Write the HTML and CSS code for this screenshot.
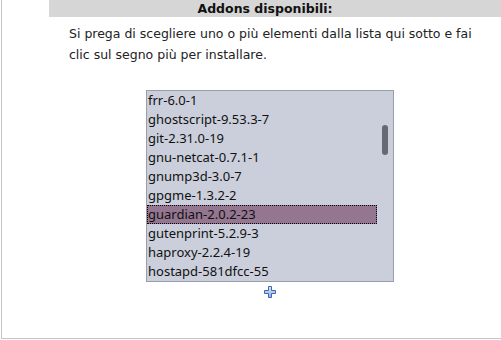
FILE: index.html
```html
<!DOCTYPE html>
<html lang="it">
<head>
    <meta charset="UTF-8">
    <title>Addons disponibili</title>
    <link rel="stylesheet" href="styles.css">
</head>
<body>
    <div class="panel">
        <div class="panel-title">Addons disponibili:</div>
        <p class="intro">Si prega di scegliere uno o più elementi dalla lista qui sotto e fai clic sul segno più per installare.</p>

        <div class="addon-list">
            <ul class="items">
                <li>frr-6.0-1</li>
                <li>ghostscript-9.53.3-7</li>
                <li>git-2.31.0-19</li>
                <li>gnu-netcat-0.7.1-1</li>
                <li>gnump3d-3.0-7</li>
                <li>gpgme-1.3.2-2</li>
                <li class="selected">guardian-2.0.2-23</li>
                <li>gutenprint-5.2.9-3</li>
                <li>haproxy-2.2.4-19</li>
                <li>hostapd-581dfcc-55</li>
            </ul>
            <div class="scrollbar"><div class="thumb"></div></div>
        </div>

        <div class="add-row">
            <svg class="add-icon" width="12" height="12" viewBox="0 0 12 12">
                <defs>
                    <linearGradient id="plusFill" x1="0" y1="0" x2="0" y2="1">
                        <stop offset="0" stop-color="#dbe7f8"/>
                        <stop offset="1" stop-color="#8fb0e0"/>
                    </linearGradient>
                </defs>
                <path d="M4.5 0.5h3v4h4v3h-4v4h-3v-4h-4v-3h4z" fill="url(#plusFill)" stroke="#3d66ad" stroke-width="1"/>
            </svg>
        </div>
    </div>
</body>
</html>
```

FILE: styles.css
```css
body {
    margin: 0;
    font-family: 'DejaVu Sans', sans-serif;
    color: #222;
    background: #fff;
}

.panel {
    margin-left: 1px;
    height: 338px;
    border-left: 1px solid #c4c4c4;
    border-bottom: 1px solid #c4c4c4;
}

.panel-title {
    margin-left: 47px;
    height: 17px;
    line-height: 17px;
    padding-right: 20px;
    background-color: #d6d6d6;
    font-weight: bold;
    font-size: 12.5px;
    text-align: center;
    color: #111;
}

.intro {
    margin: 6px 0 0 67px;
    width: 410px;
    font-size: 12.5px;
    line-height: 21px;
}

.addon-list {
    display: flex;
    margin: 25px 0 0 144px;
    width: 246px;
    height: 190px;
    border: 1px solid #9a9ea8;
    background-color: #cbcfdb;
}

.items {
    list-style: none;
    margin: 0;
    padding: 0;
    width: 230px;
    font-family: 'Noto Sans', sans-serif;
    font-size: 13px;
    color: #111;
}

.items li {
    height: 19px;
    line-height: 19px;
    padding-left: 1px;
    white-space: nowrap;
}

.items li.selected {
    background-color: #957690;
    outline: 1px dotted #000;
    outline-offset: -1px;
}

.scrollbar {
    flex: 1;
    display: flex;
    justify-content: center;
}

.thumb {
    margin-top: 34px;
    width: 6px;
    height: 30px;
    border-radius: 3px;
    background-color: #666a72;
}

.add-row {
    display: flex;
    justify-content: center;
    width: 248px;
    margin: 4px 0 0 144px;
}

.add-icon {
    display: block;
}
```
